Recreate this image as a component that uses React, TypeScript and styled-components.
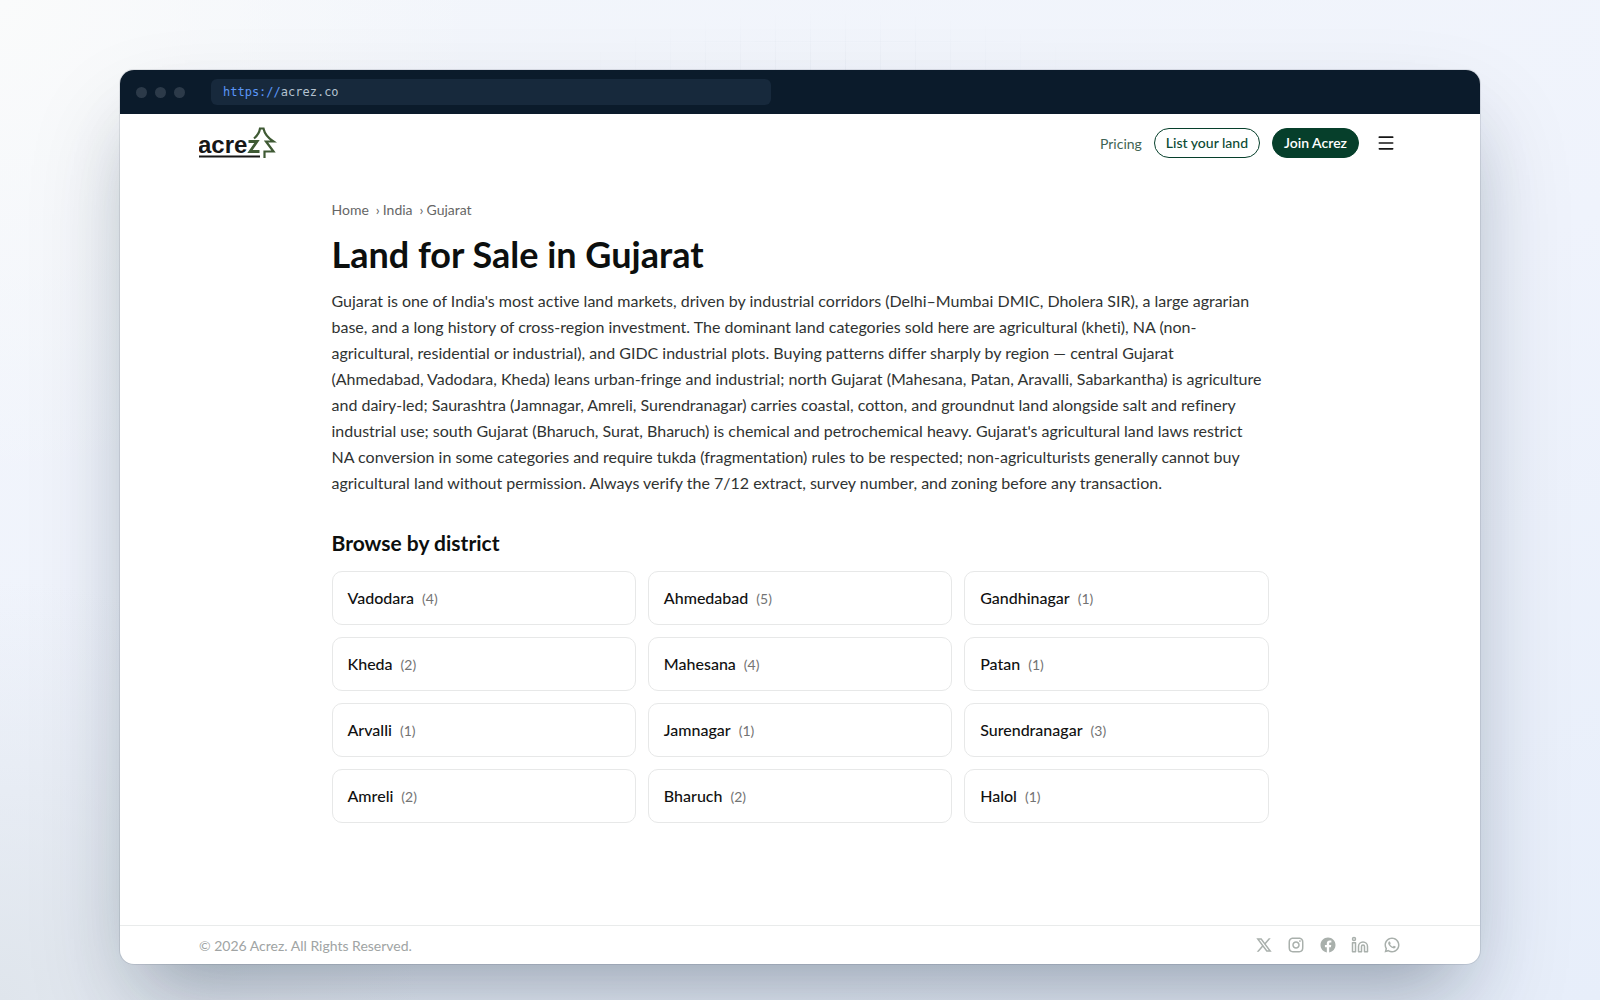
import React from "react";
import styled, { createGlobalStyle } from "styled-components";
import {
  RiTwitterXLine,
  RiInstagramLine,
  RiFacebookCircleFill,
  RiWhatsappLine,
} from "react-icons/ri";
import { Linkedin, Menu } from "lucide-react";

const sans = `Lato, "Open Sans", sans-serif`;
const mono = `"DejaVu Sans Mono", monospace`;

const GlobalStyle = createGlobalStyle`
  *, *::before, *::after { box-sizing: border-box; }
  body { margin: 0; font-family: ${sans}; color: #111; font-variant-ligatures: no-common-ligatures; }
  a { color: inherit; text-decoration: none; }
`;

const Backdrop = styled.div`
  position: relative;
  display: flex;
  min-height: 100vh;
  padding: 70px 120px 36px;
  overflow: hidden;
  background:
    radial-gradient(circle at 0% 0%, #fafbfb 0, rgba(250, 251, 251, 0) 480px),
    radial-gradient(circle at 0% 100%, #dfe5ec 0, rgba(223, 229, 236, 0) 420px),
    linear-gradient(160deg, #f3f6fb 0%, #eff3fc 50%, #e7eefa 100%);

  &::before {
    content: "";
    position: absolute;
    inset: 0;
    background:
      linear-gradient(rgba(30, 50, 90, 0.03) 1px, transparent 1px) 0 6px / 35px 35px,
      linear-gradient(90deg, rgba(30, 50, 90, 0.03) 1px, transparent 1px) 5px 0 / 35px 35px;
    mask-image: radial-gradient(ellipse 260px 60px at 52% 70px, #000, transparent);
  }
`;

const BrowserWindow = styled.div`
  position: relative;
  display: flex;
  flex: 1;
  flex-direction: column;
  min-width: 0;
  overflow: hidden;
  border-radius: 14px;
  background: #fff;
  box-shadow:
    0 0 0 1px rgba(15, 30, 50, 0.1),
    0 40px 70px -30px rgba(15, 35, 55, 0.3),
    0 50px 100px rgba(15, 35, 55, 0.14);
`;

const TitleBar = styled.div`
  display: flex;
  align-items: center;
  height: 44px;
  padding: 0 16px;
  gap: 26px;
  background: #0b1b2b;
`;

const Lights = styled.div`
  display: flex;
  gap: 8px;
`;

const Light = styled.span`
  width: 11px;
  height: 11px;
  border-radius: 50%;
  background: #2c3a49;
`;

const Address = styled.div`
  width: 560px;
  padding: 0 12px;
  border-radius: 6px;
  background: #17293c;
  color: #b4c2d0;
  font: 12px/26px ${mono};
`;

const Scheme = styled.span`
  color: #5b96f7;
`;

const Header = styled.header`
  display: flex;
  align-items: center;
  justify-content: space-between;
  height: 58px;
  padding: 0 79px;
`;

const LogoMark = styled.svg`
  display: block;
  width: 78px;
  height: 32px;
`;

const LogoText = styled.text`
  font: 700 24px "Liberation Sans", Arial, sans-serif;
  fill: #161616;
`;

const Nav = styled.nav`
  display: flex;
  align-items: center;
  gap: 12px;
  font-size: 14px;
`;

const NavLink = styled.a`
  color: #3f6454;
`;

const Pill = styled.a<{ $solid?: boolean }>`
  padding: 0 11px;
  border: 1px solid #063f2b;
  border-radius: 15px;
  background: ${(p) => (p.$solid ? "#063f2b" : "#fff")};
  color: ${(p) => (p.$solid ? "#fff" : "#0b4a34")};
  font-weight: ${(p) => (p.$solid ? 600 : 500)};
  line-height: 28px;
`;

const MenuButton = styled.button`
  display: grid;
  place-items: center;
  width: 30px;
  height: 30px;
  padding: 0;
  border: 0;
  background: none;
  color: #161616;
`;

const Main = styled.main`
  flex: 1;
  width: 100%;
  max-width: 969px;
  margin: 0 auto;
  padding: 28px 16px 96px;
`;

const Crumbs = styled.ol`
  display: flex;
  gap: 7px;
  margin: 0;
  padding: 0;
  list-style: none;
  color: #666;
  font-size: 14px;
  line-height: 20px;

  li + li::before {
    content: "›";
    margin-right: 3px;
  }
`;

const Title = styled.h1`
  margin: 12px 0;
  color: #0c0f0e;
  font-size: 36px;
  font-weight: 700;
  line-height: 44px;
`;

const Intro = styled.p`
  margin: 0;
  padding-right: 4px;
  color: #303332;
  font-size: 16px;
  line-height: 26px;
`;

const SectionTitle = styled.h2`
  margin: 33px 0 14px;
  color: #0c0f0e;
  font-size: 21px;
  font-weight: 700;
  line-height: 28px;
`;

const Grid = styled.ul`
  display: grid;
  grid-template-columns: repeat(3, 1fr);
  gap: 12px;
  margin: 0;
  padding: 0;
  list-style: none;
`;

const Card = styled.a`
  display: flex;
  align-items: baseline;
  gap: 8px;
  padding: 14px 15px;
  border: 1px solid #e7e8e8;
  border-radius: 10px;
  font-size: 16px;
  font-weight: 500;
  line-height: 24px;
`;

const Count = styled.span`
  color: #737373;
  font-size: 14px;
  font-weight: 400;
  line-height: 20px;
`;

const Footer = styled.footer`
  display: flex;
  align-items: center;
  justify-content: space-between;
  height: 39px;
  padding: 0 79px;
  border-top: 1px solid #e9ebeb;
  color: #a0a4a4;
  font-size: 14px;
`;

const Socials = styled.div`
  display: flex;
  gap: 14px;

  a {
    display: flex;
    color: #a9b0ac;
  }
`;

const districts: [string, number][] = [
  ["Vadodara", 4],
  ["Ahmedabad", 5],
  ["Gandhinagar", 1],
  ["Kheda", 2],
  ["Mahesana", 4],
  ["Patan", 1],
  ["Arvalli", 1],
  ["Jamnagar", 1],
  ["Surendranagar", 3],
  ["Amreli", 2],
  ["Bharuch", 2],
  ["Halol", 1],
];

function Logo() {
  return (
    <LogoMark viewBox="0 0 78 32" role="img" aria-label="Acrez">
      <LogoText x="-1" y="26">acre</LogoText>
      <path d="M0 29.5H61" stroke="#161616" strokeWidth="2.2" />
      <g fill="none" stroke="#3f5a34">
        <path d="M49.500 14.500H58L51 24.500H60.500" strokeWidth="2.8" />
        <path
          d="M55 11.500C58.500 8.500 60.500 5 61 1.500H64.500C65.500 6.500 69 11 74.500 14.500H67L74.500 24.500H65.500V31"
          strokeWidth="2.2"
        />
      </g>
    </LogoMark>
  );
}

export default function App() {
  return (
    <Backdrop>
      <GlobalStyle />
      <BrowserWindow>
        <TitleBar>
          <Lights>
            <Light />
            <Light />
            <Light />
          </Lights>
          <Address>
            <Scheme>https://</Scheme>acrez.co
          </Address>
        </TitleBar>
        <Header>
          <a href="#home">
            <Logo />
          </a>
          <Nav>
            <NavLink href="#pricing">Pricing</NavLink>
            <Pill href="#list">List your land</Pill>
            <Pill href="#join" $solid>
              Join Acrez
            </Pill>
            <MenuButton aria-label="Menu">
              <Menu size={20} />
            </MenuButton>
          </Nav>
        </Header>
        <Main>
          <Crumbs>
            <li><a href="#home">Home</a></li>
            <li><a href="#india">India</a></li>
            <li>Gujarat</li>
          </Crumbs>
          <Title>Land for Sale in Gujarat</Title>
          <Intro>
            Gujarat is one of India's most active land markets, driven by
            industrial corridors (Delhi–Mumbai DMIC, Dholera SIR), a large
            agrarian base, and a long history of cross-region investment. The
            dominant land categories sold here are agricultural (kheti), NA
            (non-agricultural, residential or industrial), and GIDC industrial
            plots. Buying patterns differ sharply by region — central Gujarat
            (Ahmedabad, Vadodara, Kheda) leans urban-fringe and industrial;
            north Gujarat (Mahesana, Patan, Aravalli, Sabarkantha) is
            agriculture and dairy-led; Saurashtra (Jamnagar, Amreli,
            Surendranagar) carries coastal, cotton, and groundnut land alongside
            salt and refinery industrial use; south Gujarat (Bharuch, Surat,
            Bharuch) is chemical and petrochemical heavy. Gujarat's agricultural
            land laws restrict NA conversion in some categories and require
            tukda (fragmentation) rules to be respected; non-agriculturists
            generally cannot buy agricultural land without permission. Always
            verify the 7/12 extract, survey number, and zoning before any
            transaction.
          </Intro>
          <SectionTitle>Browse by district</SectionTitle>
          <Grid>
            {districts.map(([name, count]) => (
              <li key={name}>
                <Card href={`#${name.toLowerCase()}`}>
                  {name}
                  <Count>({count})</Count>
                </Card>
              </li>
            ))}
          </Grid>
        </Main>
        <Footer>
          <span>© 2026 Acrez. All Rights Reserved.</span>
          <Socials>
            <a href="#x" aria-label="X"><RiTwitterXLine size={18} /></a>
            <a href="#instagram" aria-label="Instagram"><RiInstagramLine size={18} /></a>
            <a href="#facebook" aria-label="Facebook"><RiFacebookCircleFill size={18} /></a>
            <a href="#linkedin" aria-label="LinkedIn"><Linkedin size={18} /></a>
            <a href="#whatsapp" aria-label="WhatsApp"><RiWhatsappLine size={18} /></a>
          </Socials>
        </Footer>
      </BrowserWindow>
    </Backdrop>
  );
}
